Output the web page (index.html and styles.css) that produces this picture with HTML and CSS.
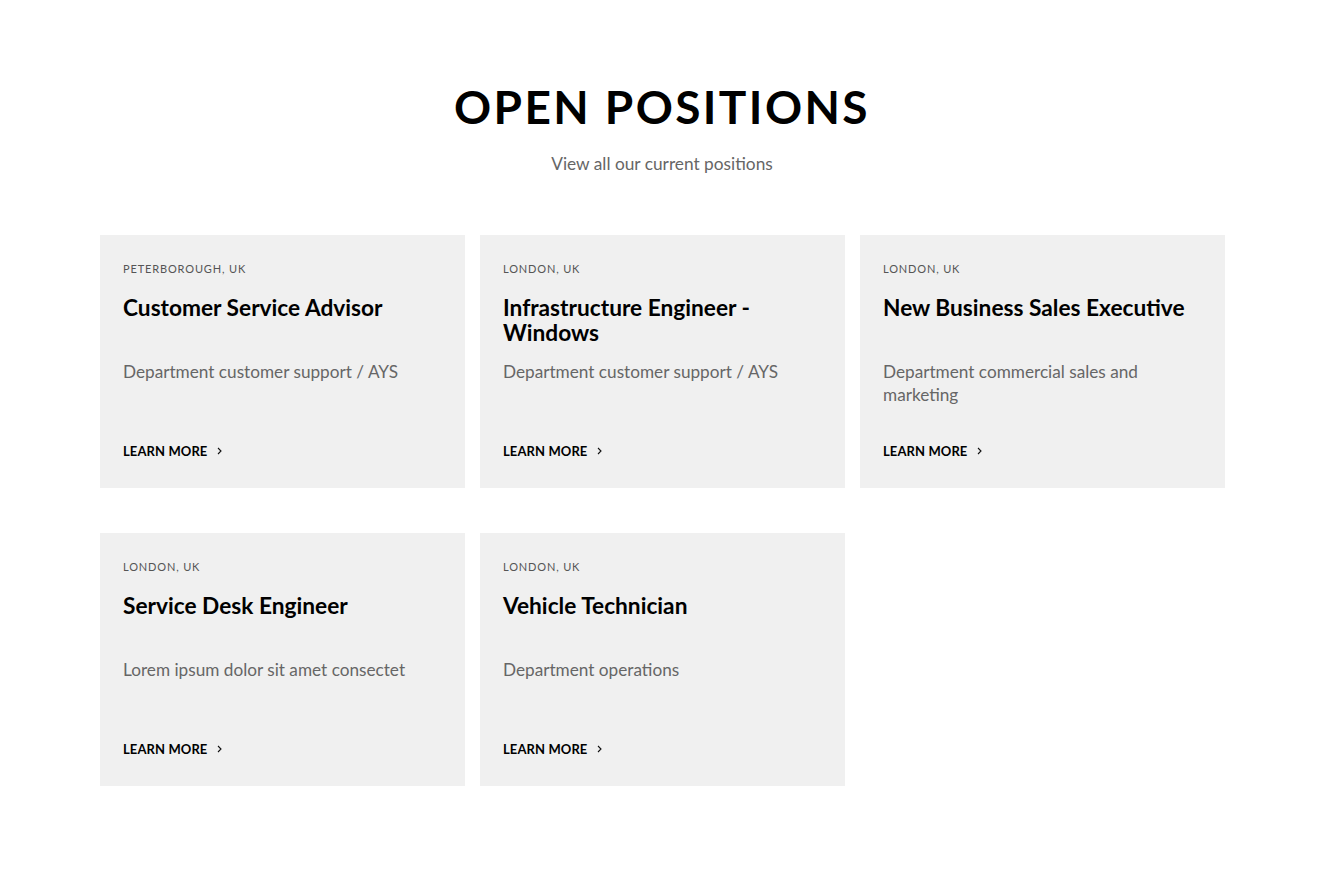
FILE: index.html
```html
<!DOCTYPE html>
<html lang="en">
<head>
<meta charset="utf-8">
<title>Open Positions</title>
<link rel="stylesheet" href="styles.css">
</head>
<body>
<section class="positions">
  <h1 class="positions-title">OPEN POSITIONS</h1>
  <p class="positions-sub">View all our current positions</p>
  <div class="grid">
    <article class="card">
      <div class="loc">PETERBOROUGH, UK</div>
      <h2 class="job">Customer Service Advisor</h2>
      <p class="dept">Department customer support / AYS</p>
      <a class="more" href="#">LEARN MORE <svg class="chev" width="5" height="8" viewBox="0 0 5 8"><path d="M1 1l3 3-3 3" fill="none" stroke="#111" stroke-width="1.1"/></svg></a>
    </article>
    <article class="card">
      <div class="loc">LONDON, UK</div>
      <h2 class="job">Infrastructure Engineer - Windows</h2>
      <p class="dept">Department customer support / AYS</p>
      <a class="more" href="#">LEARN MORE <svg class="chev" width="5" height="8" viewBox="0 0 5 8"><path d="M1 1l3 3-3 3" fill="none" stroke="#111" stroke-width="1.1"/></svg></a>
    </article>
    <article class="card">
      <div class="loc">LONDON, UK</div>
      <h2 class="job">New Business Sales Executive</h2>
      <p class="dept">Department commercial sales and marketing</p>
      <a class="more" href="#">LEARN MORE <svg class="chev" width="5" height="8" viewBox="0 0 5 8"><path d="M1 1l3 3-3 3" fill="none" stroke="#111" stroke-width="1.1"/></svg></a>
    </article>
    <article class="card">
      <div class="loc">LONDON, UK</div>
      <h2 class="job">Service Desk Engineer</h2>
      <p class="dept">Lorem ipsum dolor sit amet consectet</p>
      <a class="more" href="#">LEARN MORE <svg class="chev" width="5" height="8" viewBox="0 0 5 8"><path d="M1 1l3 3-3 3" fill="none" stroke="#111" stroke-width="1.1"/></svg></a>
    </article>
    <article class="card">
      <div class="loc">LONDON, UK</div>
      <h2 class="job">Vehicle Technician</h2>
      <p class="dept">Department operations</p>
      <a class="more" href="#">LEARN MORE <svg class="chev" width="5" height="8" viewBox="0 0 5 8"><path d="M1 1l3 3-3 3" fill="none" stroke="#111" stroke-width="1.1"/></svg></a>
    </article>
  </div>
</section>
</body>
</html>
```
FILE: styles.css
```css
* { box-sizing: border-box; }
html, body { margin: 0; padding: 0; background: #fff; }
body { font-family: Lato, "Open Sans", sans-serif; color: #000; }

.positions { padding-top: 79px; }
.positions-title {
  margin: 0;
  text-align: center;
  font-size: 46px;
  line-height: 56px;
  font-weight: 700;
  letter-spacing: 2.4px;
  color: #000;
}
.positions-sub {
  margin: 17px 0 0;
  text-align: center;
  font-size: 17.3px;
  line-height: 24px;
  color: #666;
}
.grid {
  width: 1124px;
  margin: 59px auto 0;
  display: grid;
  grid-template-columns: repeat(3, 365px);
  column-gap: 15px;
  row-gap: 45px;
}
.card {
  height: 253px;
  background: #f0f0f0;
  padding: 26px 23px 0;
}
.loc {
  font-size: 11px;
  line-height: 16px;
  letter-spacing: 0.85px;
  color: #555;
}
.job {
  margin: 18px 0 0;
  font-size: 22.7px;
  line-height: 25px;
  font-weight: 700;
  min-height: 50px;
  color: #000;
}
.dept {
  margin: 15px 0 0;
  font-size: 17.2px;
  line-height: 23px;
  min-height: 46px;
  color: #666;
}
.more {
  display: inline-flex;
  align-items: center;
  gap: 10px;
  margin-top: 36px;
  font-size: 13px;
  line-height: 18px;
  font-weight: 700;
  letter-spacing: 0.1px;
  color: #000;
  text-decoration: none;
}
.chev { display: block; }
```
